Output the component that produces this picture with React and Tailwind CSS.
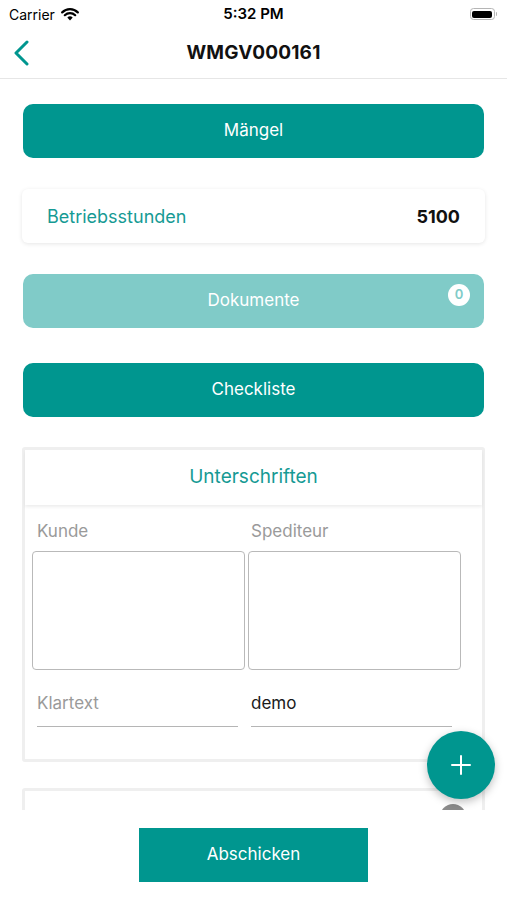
import React from "react";

const font = { fontFamily: "Inter, 'Liberation Sans', sans-serif" };

const StatusBar = () => (
  <div className="h-[28px] flex items-center justify-between px-[9px] relative">
    <div className="flex items-center gap-[6px] text-[14px] text-black">
      <span>Carrier</span>
      {/* wifi */}
      <svg width="18" height="13" viewBox="0 0 18 13">
        <path d="M9 12.5 L6.3 9.6 A3.9 3.9 0 0 1 11.7 9.6 Z" fill="#000" />
        <path d="M3.8 7.2 A7.4 7.4 0 0 1 14.2 7.2" stroke="#000" strokeWidth="2.2" fill="none" strokeLinecap="round" />
        <path d="M1.2 4.4 A11 11 0 0 1 16.8 4.4" stroke="#000" strokeWidth="2.2" fill="none" strokeLinecap="round" />
      </svg>
    </div>
    <span className="absolute left-1/2 -translate-x-1/2 text-[15px] font-semibold text-black">5:32 PM</span>
    <div className="flex items-center gap-[1px] mr-[1px]">
      <div className="w-[25px] h-[12px] rounded-[3.5px] border border-[#b5b5b5] p-[1.5px]">
        <div className="w-full h-full rounded-[2px] bg-black" />
      </div>
      <div className="w-[1.5px] h-[4px] rounded-r bg-[#b5b5b5]" />
    </div>
  </div>
);

const NavBar = () => (
  <div className="h-[51px] flex items-center justify-center relative border-b border-[#e6e6e6]">
    <svg className="absolute left-[12px] top-[12px]" width="18" height="26" viewBox="0 0 18 26">
      <path d="M15 2 L4 13 L15 24" stroke="#00968f" strokeWidth="3" fill="none" strokeLinecap="round" strokeLinejoin="round" />
    </svg>
    <span className="text-[19px] font-bold text-[#111] tracking-[0.2px]">WMGV000161</span>
  </div>
);

const TealButton = ({ label, light, badge }) => (
  <div
    className={`relative h-[54px] rounded-[10px] flex items-center justify-center text-[17px] text-white ${
      light ? "bg-[#80cbc8]" : "bg-[#00968f]"
    }`}
  >
    {label}
    {badge !== undefined && (
      <span className="absolute right-[14px] top-[10px] w-[22px] h-[22px] rounded-full bg-white flex items-center justify-center text-[13px] font-semibold text-[#80cbc8]">
        {badge}
      </span>
    )}
  </div>
);

export default function App() {
  return (
    <div className="w-[507px] h-[900px] bg-white flex flex-col overflow-hidden" style={font}>
      <StatusBar />
      <NavBar />

      <div className="flex-1 relative overflow-hidden">
        <div className="px-[23px] pt-[25px] flex flex-col">
          <TealButton label="Mängel" />

          <div className="mt-[31px] -mx-[1px] h-[54px] rounded-[6px] bg-white shadow-[0_1px_4px_rgba(0,0,0,0.1)] flex items-center justify-between pl-[25px] pr-[25px]">
            <span className="text-[18px] text-[#169a94]">Betriebsstunden</span>
            <span className="text-[18px] font-bold text-[#111]">5100</span>
          </div>

          <div className="mt-[31px]">
            <TealButton label="Dokumente" light badge="0" />
          </div>

          <div className="mt-[35px]">
            <TealButton label="Checkliste" />
          </div>

          {/* Unterschriften */}
          <div className="mt-[30px] -mx-[1px] border-[3px] border-[#efefef] rounded-[3px] pb-[32px]">
            <div className="h-[55px] bg-white shadow-[0_2px_3px_rgba(0,0,0,0.07)] flex items-center justify-center text-[19px] text-[#169a94]">
              Unterschriften
            </div>
            <div className="pl-[7px] pr-[21px] pt-[15px]">
              <div className="grid grid-cols-2 gap-[3px]">
                <div>
                  <div className="pl-[5px] text-[17px] text-[#9a9a9a] leading-[22px]">Kunde</div>
                  <div className="mt-[9px] h-[119px] border-[1.5px] border-[#b9b9b9] rounded-[4px]" />
                </div>
                <div>
                  <div className="pl-[3px] text-[17px] text-[#9a9a9a] leading-[22px]">Spediteur</div>
                  <div className="mt-[9px] h-[119px] border-[1.5px] border-[#b9b9b9] rounded-[4px]" />
                </div>
              </div>
              <div className="grid grid-cols-2 gap-[13px] pl-[5px] pr-[9px] mt-[22px]">
                <div className="border-b-[1.5px] border-[#b5b5b5] pb-[12px] text-[17px] text-[#9a9a9a] leading-[22px]">
                  Klartext
                </div>
                <div className="border-b-[1.5px] border-[#b5b5b5] pb-[12px] text-[17px] text-[#1a1a1a] leading-[22px]">
                  demo
                </div>
              </div>
            </div>
          </div>

          {/* next card, clipped */}
          <div className="mt-[26px] -mx-[1px] h-[60px] border-[3px] border-[#efefef] rounded-[3px] relative">
            <div className="absolute right-[16px] top-[13px] w-[26px] h-[26px] rounded-full bg-[#8a8a8a]" />
          </div>
        </div>

        {/* FAB */}
        <div className="absolute left-[427px] top-[652px] w-[68px] h-[68px] rounded-full bg-[#00968f] shadow-[0_3px_8px_rgba(0,0,0,0.25)] flex items-center justify-center">
          <svg width="20" height="20" viewBox="0 0 20 20">
            <path d="M10 1 V19 M1 10 H19" stroke="#fff" strokeWidth="2" strokeLinecap="round" />
          </svg>
        </div>
      </div>

      <div className="h-[90px] bg-white flex justify-center pt-[18px]">
        <div className="w-[229px] h-[54px] bg-[#00968f] flex items-center justify-center text-[17px] text-white">
          Abschicken
        </div>
      </div>
    </div>
  );
}
